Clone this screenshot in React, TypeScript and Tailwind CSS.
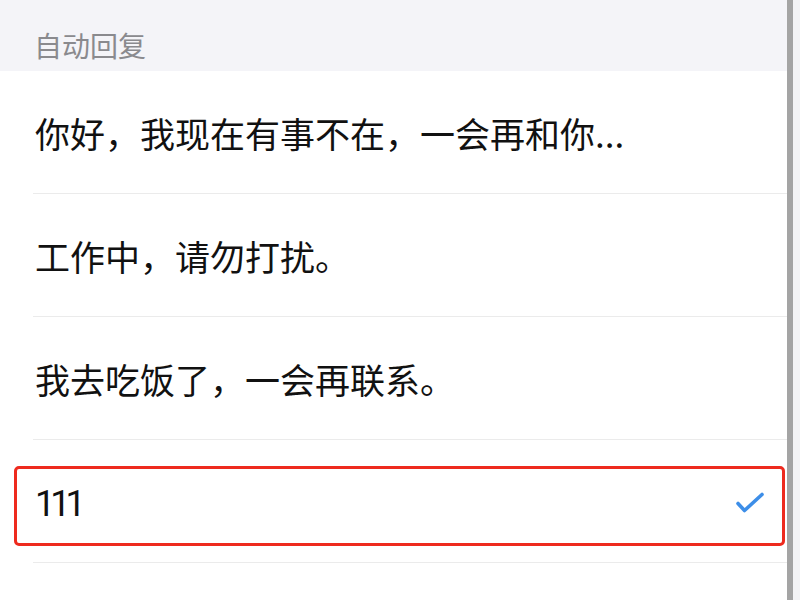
const replies = [
  { text: "你好，我现在有事不在，一会再和你...", selected: false },
  { text: "工作中，请勿打扰。", selected: false },
  { text: "我去吃饭了，一会再联系。", selected: false },
  { text: "111", selected: true },
];

function Check() {
  return (
    <svg width="30" height="24" viewBox="0 0 30 24" fill="none" className="text-[#3d8ee8]">
      <path d="M3 12.5L9.5 19.5L27 3.5" stroke="currentColor" strokeWidth="3.6" strokeLinecap="round" strokeLinejoin="round" />
    </svg>
  );
}

export default function App() {
  return (
    <div className="flex h-[600px] w-[800px] overflow-hidden bg-white font-['Noto_Sans_CJK_SC','Noto_Sans',sans-serif]">
      <main className="flex w-[787px] flex-col">
        <header className="h-[71px] bg-[#f4f4f8] pl-[34px] pt-[31px]">
          <p className="text-[28px] leading-[28px] text-[#8a8a8e]">自动回复</p>
        </header>

        <ul>
          {replies.map((r) => (
            <li key={r.text} className="relative ml-[33px] flex h-[123px] items-center border-b border-[#ebebeb] pl-[2px] pr-[22px]">
              <span className={r.selected ? "mt-[5px] font-['Roboto',sans-serif] text-[36px] leading-none tracking-[-5px] text-[#111]" : "text-[35px] leading-none text-[#111]"}>{r.text}</span>
              {r.selected && (
                <>
                  <span className="ml-auto mt-[3px]"><Check /></span>
                  <div className="absolute left-[-19px] top-[26px] h-[80px] w-[771px] rounded-[5px] border-[3.5px] border-[#ee2a1e]" />
                </>
              )}
            </li>
          ))}
        </ul>
      </main>
      <div className="w-[6px] bg-[#a4a4a4]" />
      <div className="flex-1 bg-[#f3f3f5]" />
    </div>
  );
}
